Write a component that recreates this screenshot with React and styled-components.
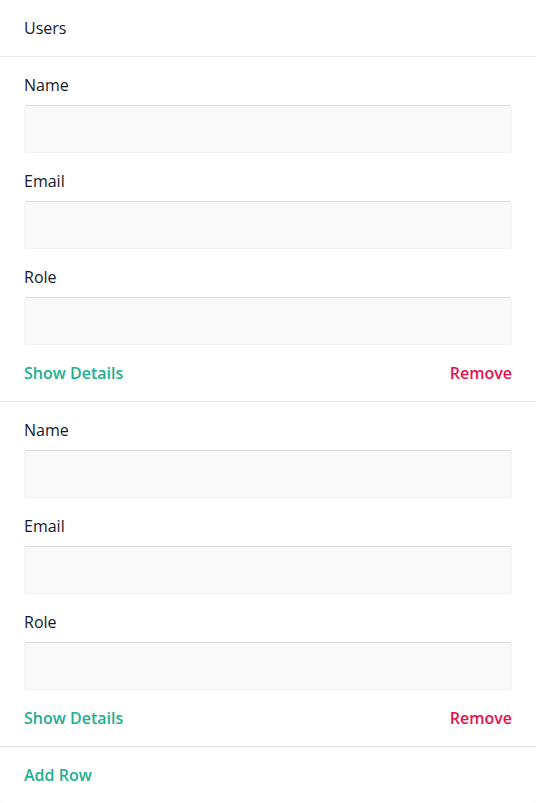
import React from "react";
import styled, { createGlobalStyle } from "styled-components";

const Global = createGlobalStyle`
  html, body { margin: 0; padding: 0; background: #fff; }
  body { font-family: "Open Sans", "Noto Sans", sans-serif; }
  * { box-sizing: border-box; }
`;

const Card = styled.div`
  width: 536px;
  height: 802px;
  background: #fff;
  border-radius: 0 0 4px 4px;
  box-shadow: 0 1px 1px rgba(0, 0, 0, 0.06);
  display: flex;
  flex-direction: column;
`;

const Header = styled.div`
  padding: 16px 24px;
  font-size: 16px;
  line-height: 24px;
  color: #16182b;
  border-bottom: 1px solid #e8e8e8;
`;

const Section = styled.div`
  padding: 16px 24px;
  display: flex;
  flex-direction: column;
  gap: 16px;
  border-bottom: ${(p) => (p.$last ? "none" : "1px solid #e8e8e8")};
`;

const Field = styled.div`
  display: flex;
  flex-direction: column;
  gap: 8px;
`;

const Label = styled.label`
  font-size: 16px;
  line-height: 24px;
  color: #16182b;
`;

const Input = styled.input`
  height: 48px;
  width: 100%;
  background: #f9f9f9;
  border: 1px solid #f1f1f1;
  border-top-color: #dcdcdc;
  border-radius: 3px;
  outline: none;
  font: inherit;
  padding: 0 12px;
`;

const Actions = styled.div`
  display: flex;
  justify-content: space-between;
  align-items: center;
`;

const LinkButton = styled.button`
  background: none;
  border: none;
  padding: 0;
  font-family: inherit;
  font-size: 16px;
  line-height: 24px;
  font-weight: 600;
  color: ${(p) => (p.$danger ? "#ea104c" : "#22ae8f")};
  cursor: pointer;
`;

const Entry = () => (
  <Section>
    <Field>
      <Label>Name</Label>
      <Input />
    </Field>
    <Field>
      <Label>Email</Label>
      <Input />
    </Field>
    <Field>
      <Label>Role</Label>
      <Input />
    </Field>
    <Actions>
      <LinkButton>Show Details</LinkButton>
      <LinkButton $danger>Remove</LinkButton>
    </Actions>
  </Section>
);

export default function App() {
  return (
    <>
      <Global />
      <Card>
        <Header>Users</Header>
        <Entry />
        <Entry />
        <Section $last>
          <Actions>
            <LinkButton>Add Row</LinkButton>
          </Actions>
        </Section>
      </Card>
    </>
  );
}
